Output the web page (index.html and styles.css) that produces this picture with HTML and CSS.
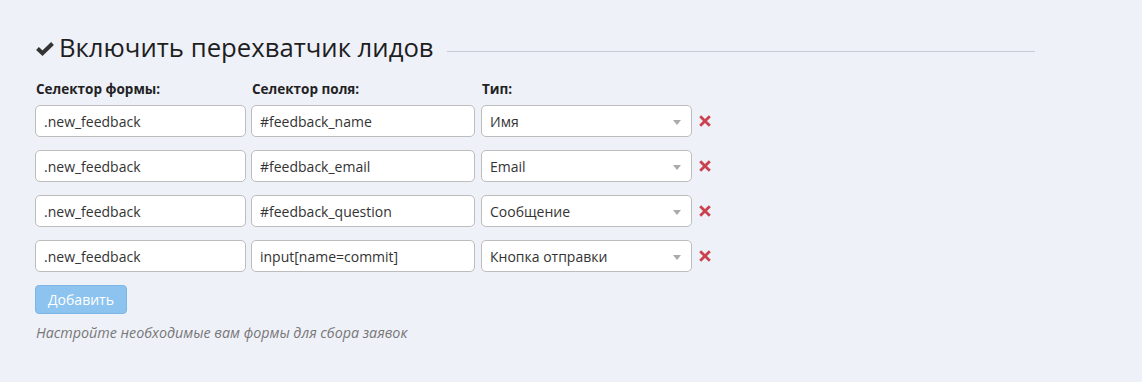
FILE: index.html
```html
<!DOCTYPE html>
<html lang="ru">
<head>
<meta charset="utf-8">
<link rel="stylesheet" href="styles.css">
</head>
<body>
<div class="panel">
  <div class="title-row">
    <svg class="check" width="18" height="15" viewBox="0 0 18 15"><polyline points="1.5,7.5 6.5,12.2 16.5,2.5" fill="none" stroke="#333" stroke-width="4" stroke-linejoin="miter"/></svg>
    <span class="title">Включить перехватчик лидов</span>
    <span class="rule"></span>
  </div>
  <div class="grid">
    <div class="label">Селектор формы:</div>
    <div class="label">Селектор поля:</div>
    <div class="label">Тип:</div>
    <div></div>

    <input class="field" value=".new_feedback">
    <input class="field" value="#feedback_name">
    <div class="select">Имя</div>
    <svg class="remove" width="12" height="12" viewBox="0 0 12 12"><path d="M1.2 1.2L10.8 10.8M10.8 1.2L1.2 10.8" stroke="#c9424e" stroke-width="2.8"/></svg>

    <input class="field" value=".new_feedback">
    <input class="field" value="#feedback_email">
    <div class="select">Email</div>
    <svg class="remove" width="12" height="12" viewBox="0 0 12 12"><path d="M1.2 1.2L10.8 10.8M10.8 1.2L1.2 10.8" stroke="#c9424e" stroke-width="2.8"/></svg>

    <input class="field" value=".new_feedback">
    <input class="field" value="#feedback_question">
    <div class="select">Сообщение</div>
    <svg class="remove" width="12" height="12" viewBox="0 0 12 12"><path d="M1.2 1.2L10.8 10.8M10.8 1.2L1.2 10.8" stroke="#c9424e" stroke-width="2.8"/></svg>

    <input class="field" value=".new_feedback">
    <input class="field" value="input[name=commit]">
    <div class="select">Кнопка отправки</div>
    <svg class="remove" width="12" height="12" viewBox="0 0 12 12"><path d="M1.2 1.2L10.8 10.8M10.8 1.2L1.2 10.8" stroke="#c9424e" stroke-width="2.8"/></svg>
  </div>
  <button class="add">Добавить</button>
  <p class="help">Настройте необходимые вам формы для сбора заявок</p>
</div>
</body>
</html>
```
FILE: styles.css
```css
html, body {
  margin: 0;
  padding: 0;
  background: #eff1f9;
  font-family: "Open Sans", "Noto Sans", sans-serif;
  color: #333;
}
.panel {
  width: 1000px;
  padding: 30px 0 0 35px;
}
.title-row {
  display: flex;
  align-items: center;
  height: 36px;
}
.check {
  margin-left: 1px;
  margin-right: 5px;
  margin-top: 1px;
}
.title {
  font-size: 25.7px;
  line-height: 36px;
  color: #1e1e1e;
  white-space: nowrap;
}
.rule {
  flex: 1;
  height: 1px;
  background: #c8cad8;
  margin-left: 13px;
  margin-top: 6px;
}
.grid {
  display: grid;
  grid-template-columns: 211px 224px 211px 12px;
  column-gap: 5px;
  row-gap: 13px;
  align-items: center;
  margin-top: 14px;
}
.grid > :nth-child(4n+3) {
  margin-left: 1px;
}
.grid > :nth-child(4n+4) {
  margin-left: 3px;
}
.label {
  font-size: 13.5px;
  font-weight: 700;
  line-height: 18px;
  color: #222;
  margin-bottom: -6px;
  padding-left: 1px;
}
.field, .select {
  box-sizing: border-box;
  height: 32px;
  border: 1px solid #bdbdbd;
  border-radius: 5px;
  background: #fff;
  font-family: "Open Sans", "Noto Sans", sans-serif;
  font-size: 14px;
  color: #333;
  padding: 0 8px;
  margin: 0;
  width: 100%;
  outline: none;
}
.grid > .select {
  width: 211px;
}
.select {
  position: relative;
  display: flex;
  align-items: center;
}
.select::after {
  content: "";
  position: absolute;
  right: 10px;
  top: 14px;
  border-left: 4px solid transparent;
  border-right: 4px solid transparent;
  border-top: 5px solid #aaa;
}
.remove {
  display: block;
}
.add {
  display: block;
  margin-top: 13px;
  width: 92px;
  height: 29px;
  box-sizing: border-box;
  border: 1px solid #7db6e6;
  border-radius: 4px;
  background: #8dc4ef;
  color: #fff;
  font-family: "Open Sans", "Noto Sans", sans-serif;
  font-size: 14px;
  padding: 0;
}
.help {
  margin: 10px 0 0 1px;
  font-size: 14.3px;
  line-height: 18px;
  font-style: italic;
  color: #777;
}
```
